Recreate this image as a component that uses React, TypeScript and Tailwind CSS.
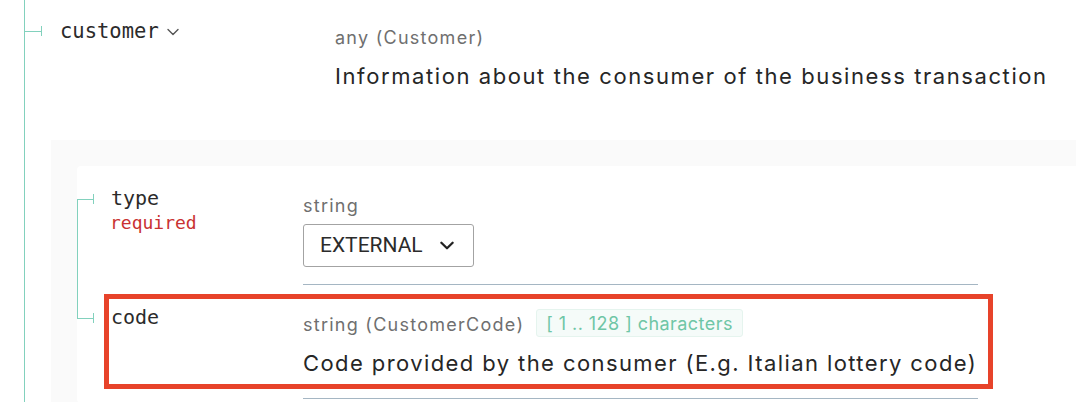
import React from "react";

const mono = "font-['DejaVu_Sans_Mono','Liberation_Mono',monospace]";
const sans = "font-['Inter','Noto_Sans',sans-serif]";

function Chevron({ className, width = 1.4 }: { className?: string; width?: number }) {
  return (
    <svg viewBox="0 0 12 8" className={className} fill="none" stroke="currentColor">
      <polyline points="1,1.5 6,6.5 11,1.5" strokeWidth={width} strokeLinecap="round" strokeLinejoin="round" />
    </svg>
  );
}

function Tick({ top, left, length = 16 }: { top: number; left: number; length?: number }) {
  return (
    <span className="absolute flex items-center h-[10px]" style={{ top: top - 5, left }}>
      <span className="h-px bg-[#82d1bd]" style={{ width: length }} />
      <span className="w-px h-[10px] bg-[#82d1bd]" />
    </span>
  );
}

export default function App() {
  return (
    <div className={`w-[1076px] h-[402px] overflow-hidden bg-white text-[#262626] ${sans}`}>
      <div className="ml-[24px] border-l border-[#82d1bd] min-h-[402px]">
        {/* customer row */}
        <div className="flex">
          <div className="relative w-[310px] shrink-0 pt-[19px] pl-[35px]">
            <Tick top={31} left={0} length={16} />
            <span className={`${mono} text-[20.5px] leading-[24px] text-[#2b2b2b]`}>customer</span>
            <Chevron className="inline-block w-[12px] h-[8px] ml-[8px] mb-[3px] text-[#555]" />
          </div>
          <div className="pt-[27px]">
            <div className="text-[18px] leading-[22px] tracking-[0.07em] text-[#6f6f6f]">any (Customer)</div>
            <div className="mt-[12px] text-[22px] leading-[30px] tracking-[0.072em] text-[#262626] whitespace-nowrap">
              Information about the consumer of the business transaction
            </div>
          </div>
        </div>

        {/* nested object */}
        <div className="mt-[49px] ml-[26px] bg-[#fafafa] pl-[26px] pt-[26px]">
          <div className="bg-white rounded-tl-[4px] rounded-bl-[4px] pt-[18px] pb-[4px]">
            {/* type row */}
            <div className="flex">
              <div className="relative w-[226px] shrink-0 pt-[2px] pl-[34px]">
                <span className="absolute left-0 top-[15px] bottom-0 w-px bg-[#82d1bd]" />
                <Tick top={15} left={0} />
                <div className={`${mono} text-[20px] leading-[24px] text-[#2b2b2b]`}>type</div>
                <div className={`${mono} text-[18px] leading-[22px] text-[#c93232] mt-[2px] -ml-px`}>required</div>
              </div>
              <div className="w-[675px] shrink-0 pt-[11px] pb-[17px] border-b border-[#a5b6c3]">
                <div className="text-[18px] leading-[22px] tracking-[0.07em] text-[#6f6f6f]">string</div>
                <div className="mt-[7px] inline-flex items-center h-[43px] w-[171px] pl-[16px] pr-[19px] border border-[#a3a3a3] rounded-[3px] justify-between">
                  <span className="font-['Roboto',sans-serif] text-[21px] text-[#2b2b2b]">EXTERNAL</span>
                  <Chevron className="w-[14px] h-[9px] text-[#222]" width={2} />
                </div>
              </div>
            </div>

            {/* code row */}
            <div className="flex relative">
              <div className="relative w-[226px] shrink-0 pt-[20px] pl-[34px]">
                <span className="absolute left-0 top-0 h-[33px] w-px bg-[#82d1bd]" />
                <Tick top={33} left={0} />
                <div className={`${mono} text-[20px] leading-[24px] text-[#2b2b2b]`}>code</div>
              </div>
              <div className="w-[675px] shrink-0 pt-[24px] pb-[20px] border-b border-[#a5b6c3]">
                <div className="flex items-center h-[28px]">
                  <span className="text-[18px] leading-[22px] tracking-[0.07em] text-[#6f6f6f] mt-[3px]">string (CustomerCode)</span>
                  <span className="ml-[12px] h-[28px] px-[9px] flex items-center rounded-[3px] border border-[#e5f4ee] bg-[#f5fbf9] text-[18px] tracking-[0.025em] text-[#6fc6a6]">
                    [ 1 .. 128 ] characters
                  </span>
                </div>
                <div className="mt-[11px] text-[22px] leading-[30px] tracking-[0.064em] text-[#262626] whitespace-nowrap">
                  Code provided by the consumer (E.g. Italian lottery code)
                </div>
              </div>
              <div className="absolute left-[27px] top-[9px] w-[889px] h-[95px] border-[5px] border-[#e7432a] pointer-events-none" />
            </div>
          </div>
        </div>
      </div>
    </div>
  );
}
